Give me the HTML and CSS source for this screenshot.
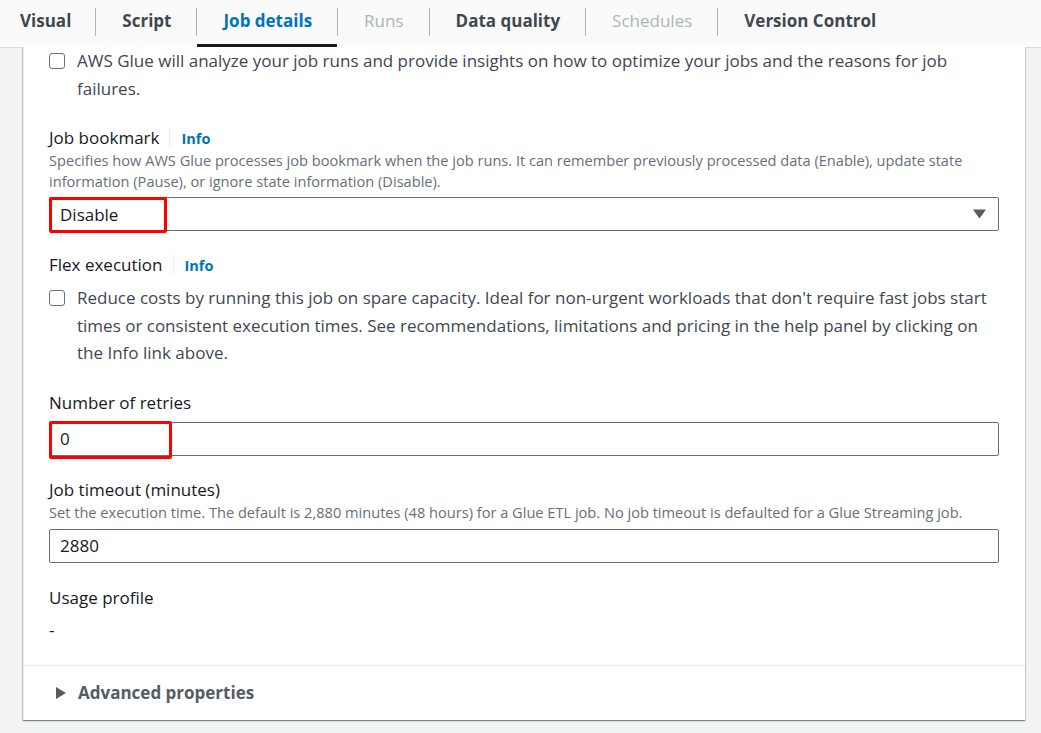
FILE: index.html
```html
<!DOCTYPE html>
<html lang="en">
<head>
<meta charset="utf-8">
<title>Job details</title>
<link rel="stylesheet" href="styles.css">
</head>
<body>
<div class="tabs">
  <div class="tab first">Visual</div>
  <div class="tab">Script</div>
  <div class="tab active">Job details</div>
  <div class="tab disabled">Runs</div>
  <div class="tab">Data quality</div>
  <div class="tab disabled">Schedules</div>
  <div class="tab last">Version Control</div>
</div>
<div class="card">
  <div class="body">
    <div class="check-row top-row">
      <span class="checkbox"></span>
      <span class="check-text">AWS Glue will analyze your job runs and provide insights on how to optimize your jobs and the reasons for job failures.</span>
    </div>

    <div class="field f-bookmark">
      <div class="label-row"><span class="label">Job bookmark</span><span class="sep"></span><span class="info">Info</span></div>
      <div class="desc">Specifies how AWS Glue processes job bookmark when the job runs. It can remember previously processed data (Enable), update state information (Pause), or ignore state information (Disable).</div>
      <div class="control select">
        <span class="value">Disable</span>
        <svg class="caret" width="13" height="10" viewBox="0 0 13 10"><path d="M0 0.5h13L6.5 9.5z" fill="#545b64"/></svg>
        <span class="highlight hl-select"></span>
      </div>
    </div>

    <div class="field f-flex">
      <div class="label-row"><span class="label">Flex execution</span><span class="sep"></span><span class="info">Info</span></div>
      <div class="check-row flex-row">
        <span class="checkbox"></span>
        <span class="check-text">Reduce costs by running this job on spare capacity. Ideal for non-urgent workloads that don't require fast jobs start times or consistent execution times. See recommendations, limitations and pricing in the help panel by clicking on the Info link above.</span>
      </div>
    </div>

    <div class="field f-retries">
      <div class="label-row"><span class="label">Number of retries</span></div>
      <div class="control input">
        <span class="value">0</span>
        <span class="highlight hl-input"></span>
      </div>
    </div>

    <div class="field f-timeout">
      <div class="label-row"><span class="label">Job timeout (minutes)</span></div>
      <div class="desc">Set the execution time. The default is 2,880 minutes (48 hours) for a Glue ETL job. No job timeout is defaulted for a Glue Streaming job.</div>
      <div class="control input">
        <span class="value">2880</span>
      </div>
    </div>

    <div class="field f-usage">
      <div class="label-row"><span class="label">Usage profile</span></div>
      <div class="plain-value">-</div>
    </div>
  </div>
  <div class="advanced">
    <svg class="tri" width="10" height="12" viewBox="0 0 10 12"><path d="M0 0L10 6L0 12z" fill="#545b64"/></svg>
    <span class="adv-text">Advanced properties</span>
  </div>
</div>
</body>
</html>
```
FILE: styles.css
```css
* { box-sizing: border-box; }
html, body { margin: 0; padding: 0; }
body {
  background: #f2f3f3;
  font-family: "Open Sans", "Noto Sans", sans-serif;
  color: #16191f;
  width: 1041px;
  height: 733px;
  overflow: hidden;
}
.tabs {
  display: flex;
  align-items: center;
  height: 48px;
  background: #fafafa;
  border-bottom: 1px solid #d5dbdb;
}
.tab {
  position: relative;
  height: 47px;
  display: flex;
  align-items: center;
  padding: 0 26px;
  font-size: 17px;
  font-weight: 700;
  color: #414750;
  padding-bottom: 6px;
}
.tab.first { padding-left: 20px; padding-right: 25px; }
.tab::after {
  content: "";
  position: absolute;
  right: 0;
  top: 8px;
  height: 28px;
  width: 1px;
  background: #aab7b8;
}
.tab.last::after { display: none; }
.tab.active { color: #0073bb; }
.tab.active::before {
  content: "";
  position: absolute;
  left: 0;
  right: 1px;
  bottom: 0;
  height: 3px;
  background: #16191f;
}
.tab.disabled { color: #aab7b8; font-weight: 400; }

.card {
  margin: 0 16px 0 23px;
  background: #fff;
  border-left: 1px solid #eaeded;
  box-shadow: 0 1px 1px 0 rgba(0,28,36,.3), 1px 1px 1px 0 rgba(0,28,36,.15), -1px 1px 1px 0 rgba(0,28,36,.15);
}
.body {
  padding: 0 26px 0 25px;
  border-bottom: 1px solid #eaeded;
  padding-bottom: 24px;
}
.check-row {
  display: flex;
  align-items: flex-start;
  gap: 12px;
  font-size: 17px;
  line-height: 27.5px;
  color: #414750;
}
.checkbox {
  flex: 0 0 auto;
  width: 16px;
  height: 16px;
  border: 1px solid #687078;
  border-radius: 3px;
  margin-top: 6px;
  background: #fff;
}
.check-text { flex: 1; }
.top-row { margin-top: -1px; }

.field { display: flex; flex-direction: column; }
.f-bookmark { margin-top: 25px; }
.f-flex { margin-top: 23px; }
.f-retries { margin-top: 25px; }
.f-timeout { margin-top: 23px; }
.f-usage { margin-top: 24px; }

.label-row {
  display: flex;
  align-items: center;
  height: 22px;
  font-size: 17px;
}
.label { line-height: 22px; }
.sep {
  width: 1px;
  height: 20px;
  background: #eaeded;
  margin: 0 11px 0 10px;
}
.info {
  font-size: 14.5px;
  font-weight: 700;
  color: #0073bb;
}
.desc {
  font-size: 14.6px;
  line-height: 21px;
  color: #687078;
  margin-top: 1px;
}
.control {
  position: relative;
  height: 34px;
  border: 1px solid #687078;
  border-radius: 2px;
  display: flex;
  align-items: center;
  padding: 0 12px 0 10px;
  font-size: 17px;
  margin-top: 5px;
}
.f-timeout .control { margin-top: 6px; }
.f-retries .control { margin-top: 8px; }
.value { flex: 1; }
.caret { flex: 0 0 auto; }
.flex-row { margin-top: 8px; }
.highlight {
  position: absolute;
  left: -1px;
  top: -1px;
  border: 3px solid #ff0000;
  border-radius: 2px;
}
.hl-select { width: 118px; height: 36px; }
.hl-input { width: 123px; height: 38px; top: -2px; }
.plain-value {
  font-size: 17px;
  line-height: 22px;
  margin-top: 10px;
}
.advanced {
  height: 54px;
  display: flex;
  align-items: center;
  padding-left: 32px;
  gap: 12px;
}
.adv-text {
  font-size: 17px;
  font-weight: 700;
  color: #545b64;
}
```
